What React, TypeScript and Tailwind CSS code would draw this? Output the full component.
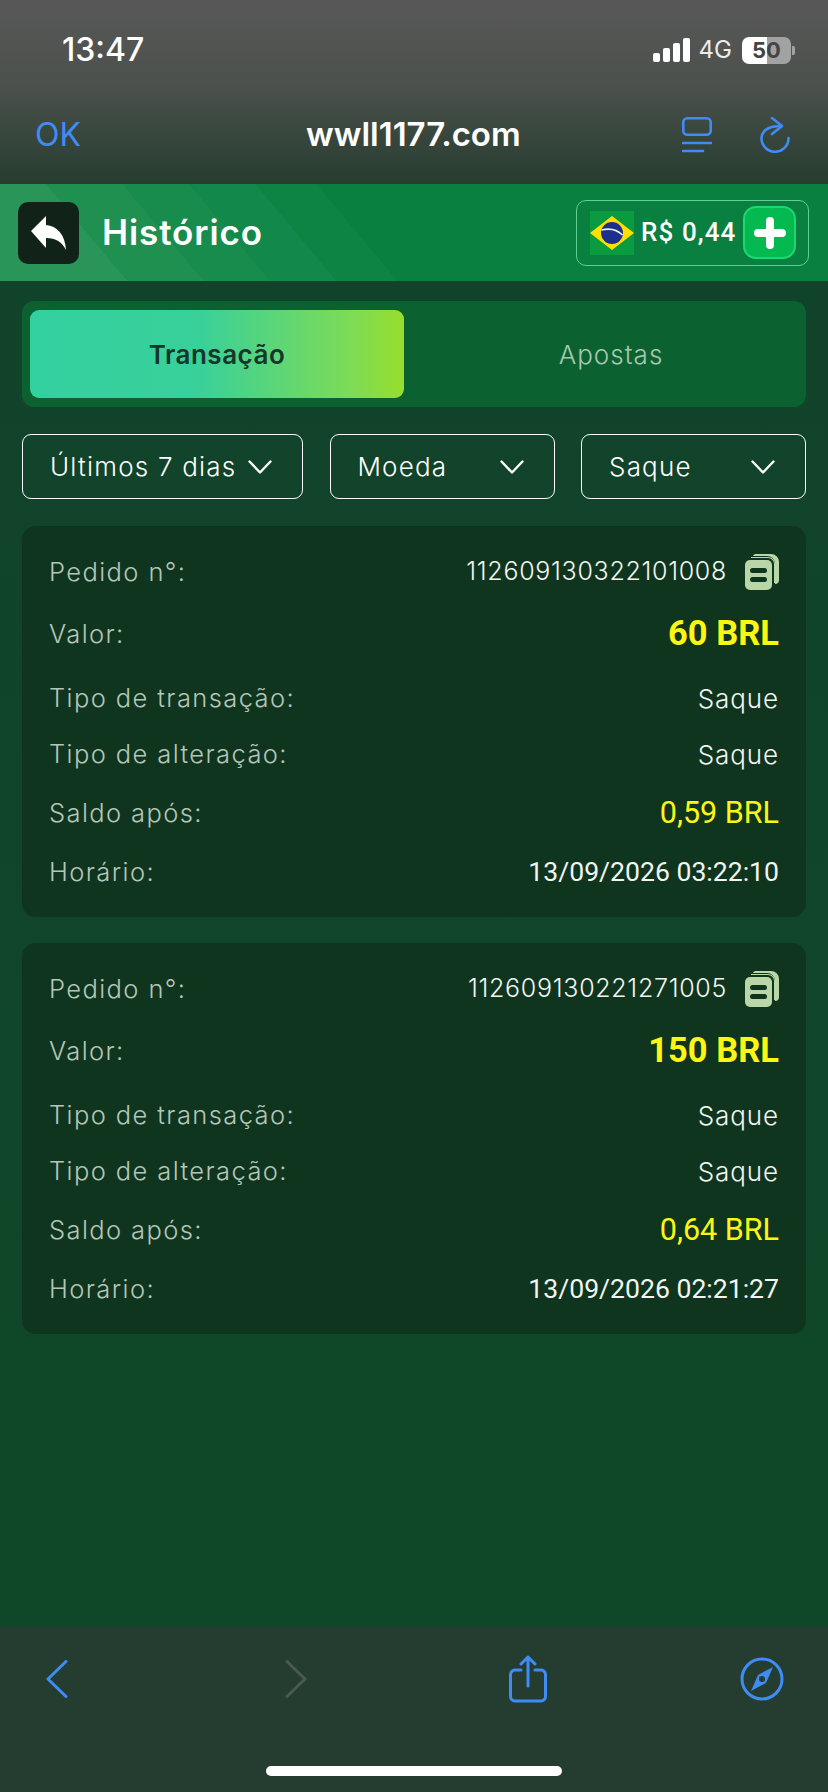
const ROW_GAPS = ["mt-0", "mt-[22px]", "mt-[24px]", "mt-[16px]", "mt-[19px]", "mt-[19px]"];

function CopyIcon() {
  return (
    <svg width="34" height="36" viewBox="0 0 34 36" className="ml-[18px] shrink-0">
      <path d="M10 0h16a8 8 0 0 1 8 8v18a4 4 0 0 1-4 4v-20a8 8 0 0 0-8-8H8a3 3 0 0 1 2-2z" fill="#b9d6a8" />
      <path d="M6 3h17a7 7 0 0 1 7 7v19h-1V10a6 6 0 0 0-6-6H6z" fill="#b9d6a8" />
      <rect x="0" y="6" width="27" height="30" rx="5" fill="#b9d6a8" />
      <rect x="5" y="14" width="17" height="5" rx="2.5" fill="#10351f" />
      <rect x="5" y="23" width="17" height="5" rx="2.5" fill="#10351f" />
    </svg>
  );
}

function Flag() {
  return (
    <svg width="44" height="44" viewBox="0 0 44 44" className="shrink-0">
      <rect width="44" height="44" fill="#0a9a3f" />
      <polygon points="22,5 44,22 22,39 0,22" fill="#fedf00" />
      <circle cx="22" cy="22" r="11" fill="#1c2f8c" />
      <path d="M11.5 19c8-2 15-1 21 5" stroke="#e6eef0" strokeWidth="1.6" fill="none" />
    </svg>
  );
}

function Chevron() {
  return (
    <svg width="24" height="14" viewBox="0 0 24 14" fill="none" stroke="#fff" strokeWidth="2.4" strokeLinecap="round" strokeLinejoin="round" className="shrink-0">
      <path d="M1.500 1.500L12 12.500 22.500 1.500" />
    </svg>
  );
}

function Row({ label, gap, children }: { label: string; gap: string; children: React.ReactNode }) {
  return (
    <div className={`flex h-[40px] items-center justify-between ${gap}`}>
      <span className="text-[25.500px] font-light tracking-[1.4px] text-[#b4c6b9] [font-family:Inter,sans-serif]">{label}</span>
      {children}
    </div>
  );
}

function RecordCard({ order, value, balance, time }: { order: string; value: string; balance: string; time: string }) {
  const plain = "text-[26px] font-light tracking-[0.9px] text-[#f2f5f2] [font-family:Inter,sans-serif]";
  return (
    <div className="rounded-[14px] bg-[#10351f] px-[27px] pt-[26px] pb-[25px]">
      <Row label="Pedido n°:" gap={ROW_GAPS[0]}>
        <div className="flex items-center">
          <span className="text-[25px] font-light tracking-[0.7px] text-[#f2f5f2] [font-family:Inter,sans-serif]">{order}</span>
          <CopyIcon />
        </div>
      </Row>
      <Row label="Valor:" gap={ROW_GAPS[1]}>
        <span className="text-[34.500px] font-bold text-[#fdf614] [font-family:Roboto,sans-serif]">{value}</span>
      </Row>
      <Row label="Tipo de transação:" gap={ROW_GAPS[2]}>
        <span className={plain}>Saque</span>
      </Row>
      <Row label="Tipo de alteração:" gap={ROW_GAPS[3]}>
        <span className={plain}>Saque</span>
      </Row>
      <Row label="Saldo após:" gap={ROW_GAPS[4]}>
        <span className="text-[30.500px] text-[#fdf614] [font-family:Roboto,sans-serif]">{balance}</span>
      </Row>
      <Row label="Horário:" gap={ROW_GAPS[5]}>
        <span className="text-[26.600px] text-[#f2f5f2] [font-family:Roboto,sans-serif]">{time}</span>
      </Row>
    </div>
  );
}

function Filter({ label, width }: { label: string; width: string }) {
  return (
    <div className={`flex h-[65px] items-center justify-between rounded-[9px] border border-white pl-[27px] pr-[30px] ${width}`}>
      <span className="text-[26px] font-light tracking-[1.2px] text-white [font-family:Inter,sans-serif]">{label}</span>
      <Chevron />
    </div>
  );
}

export default function App() {
  return (
    <div className="flex h-[1792px] w-[828px] flex-col overflow-hidden bg-[#10462a]">
      {/* iOS status + browser bar */}
      <div className="h-[184px] shrink-0 bg-[linear-gradient(180deg,#585858_0%,#4c514d_45%,#263d2f_100%)]">
        <div className="flex h-[100px] items-center justify-between pl-[62px] pr-[33px]">
          <span className="text-[32px] font-medium text-white [font-family:Inter,sans-serif]">13:47</span>
          <div className="flex items-center">
            <svg width="37" height="24" viewBox="0 0 37 24">
              <rect x="0" y="15" width="7" height="9" rx="2" fill="#fff" />
              <rect x="10" y="10" width="7" height="14" rx="2" fill="#fff" />
              <rect x="20" y="5" width="7" height="19" rx="2" fill="#fff" />
              <rect x="30" y="0" width="7" height="24" rx="2" fill="#fff" />
            </svg>
            <span className="ml-[9px] text-[24px] text-[#ececec] [font-family:Inter,sans-serif]">4G</span>
            <div className="ml-[10px] flex h-[27px] w-[49px] items-center justify-center rounded-[7px] bg-[linear-gradient(90deg,#ffffff_50%,#a2a2a2_50%)] text-[22px] leading-none font-bold text-[#444] [font-family:Inter,sans-serif]">
              50
            </div>
            <div className="ml-[1px] h-[9px] w-[3px] rounded-r-[2px] bg-[#a2a2a2]" />
          </div>
        </div>
        <div className="flex h-[70px] items-center pl-[35px] pr-[38px]">
          <span className="w-[271px] text-[32px] text-[#3f8cf5] [font-family:Inter,sans-serif]">OK</span>
          <span className="w-[376px] text-[33px] font-semibold text-white [font-family:Inter,sans-serif]">wwll1177.com</span>
          <svg width="30" height="36" viewBox="0 0 30 36" fill="none" stroke="#3f8cf5" strokeWidth="2.6" strokeLinecap="round">
            <rect x="1.300" y="1.300" width="27.400" height="16.400" rx="4" />
            <path d="M1 26h28M1 34h20" />
          </svg>
          <svg width="30" height="36" viewBox="0 0 30 36" fill="none" stroke="#3f8cf5" strokeWidth="2.6" strokeLinecap="round" strokeLinejoin="round" className="ml-[48px]">
            <path d="M12 1l10 8-10 8" />
            <path d="M21 9.500C9 8 1.500 14 1.500 21.500A13.500 13.500 0 1 0 28.500 21" />
          </svg>
        </div>
      </div>

      {/* App header */}
      <div className="flex h-[97px] shrink-0 items-center bg-[linear-gradient(50deg,#2a9558_0%,#2a9558_14%,#1f9050_14%,#1f9050_22.400%,#188c4d_22.400%,#188c4d_29.700%,#12884a_29.700%,#12884a_37%,#0d8444_37%,#0d8444_43.700%,#0a8040_43.700%)] pl-[18px] pr-[19px]">
        <div className="flex h-[62px] w-[61px] items-center justify-center rounded-[10px] bg-[#112318]">
          <svg width="36" height="34" viewBox="0 0 36 34" fill="#fff">
            <path d="M15 0v9c11 1 19 9 20 25-4-8-10-12-20-12v10L0 15z" />
          </svg>
        </div>
        <span className="ml-[23px] text-[35px] font-semibold tracking-[0.9px] text-white [font-family:Inter,sans-serif]">Histórico</span>
        <div className="ml-auto flex h-[66px] w-[233px] items-center rounded-[10px] border border-[#5fd08f] pl-[13px] pr-[12px]">
          <Flag />
          <span className="ml-[7px] text-[26px] font-medium tracking-[1.100px] text-white [font-family:Roboto,sans-serif]">R$ 0,44</span>
          <div className="ml-auto flex h-[53px] w-[53px] items-center justify-center rounded-[13px] border-2 border-[#1fd670] bg-[#04b94f]">
            <svg width="32" height="32" viewBox="0 0 32 32" fill="#fff">
              <rect x="12" y="0" width="8" height="32" rx="4" />
              <rect x="0" y="12" width="32" height="8" rx="4" />
            </svg>
          </div>
        </div>
      </div>

      {/* Content */}
      <div className="flex-1 bg-[linear-gradient(180deg,#11432a_0%,#0f4829_100%)] px-[22px] pt-[20px]">
        <div className="flex h-[106px] items-center rounded-[12px] bg-[#0c6130] pl-[8px] pr-[8px]">
          <div className="flex h-[88px] w-[374px] items-center justify-center rounded-[9px] bg-[linear-gradient(90deg,#33d0a0_0%,#39d09a_45%,#7cdb58_85%,#97de2c_100%)] text-[26px] font-semibold tracking-[0.5px] text-[#17352a] [font-family:Inter,sans-serif]">
            Transação
          </div>
          <div className="flex-1 pl-[20px] text-center text-[26px] font-light tracking-[1px] text-[#a6c8b0] [font-family:Inter,sans-serif]">Apostas</div>
        </div>

        <div className="mt-[27px] flex justify-between">
          <Filter label="Últimos 7 dias" width="w-[281px]" />
          <Filter label="Moeda" width="w-[225px]" />
          <Filter label="Saque" width="w-[225px]" />
        </div>

        <div className="mt-[27px] flex flex-col gap-[26px]">
          <RecordCard order="112609130322101008" value="60 BRL" balance="0,59 BRL" time="13/09/2026 03:22:10" />
          <RecordCard order="112609130221271005" value="150 BRL" balance="0,64 BRL" time="13/09/2026 02:21:27" />
        </div>
      </div>

      {/* Browser toolbar */}
      <div className="h-[166px] shrink-0 bg-[#253d30] pt-[29px]">
        <div className="flex h-[48px] items-center">
          <svg width="22" height="38" viewBox="0 0 22 38" fill="none" stroke="#3f8cf5" strokeWidth="3" strokeLinecap="round" strokeLinejoin="round" className="ml-[46px]">
            <path d="M20 1.500L2 19l18 17.500" />
          </svg>
          <svg width="22" height="38" viewBox="0 0 22 38" fill="none" stroke="#4a5a50" strokeWidth="3" strokeLinecap="round" strokeLinejoin="round" className="ml-[217px]">
            <path d="M2 1.500L20 19 2 36.500" />
          </svg>
          <svg width="38" height="48" viewBox="0 0 38 48" fill="none" stroke="#3f8cf5" strokeWidth="3" strokeLinecap="round" strokeLinejoin="round" className="ml-[202px]">
            <path d="M12 15H6a4.500 4.500 0 0 0-4.500 4.500v22A4.500 4.500 0 0 0 6 46h26a4.500 4.500 0 0 0 4.500-4.500v-22A4.500 4.500 0 0 0 32 15h-6" />
            <path d="M19 31V2M12 9l7-7 7 7" />
          </svg>
          <svg width="44" height="44" viewBox="0 0 44 44" className="ml-[193px]">
            <circle cx="22" cy="22" r="20" fill="none" stroke="#3f8cf5" strokeWidth="3" />
            <path d="M33 10L26 26 18 18z" fill="#3f8cf5" />
            <path d="M11 34l7-16 8 8z" fill="#3f8cf5" />
            <circle cx="22" cy="22" r="3" fill="#253d30" />
          </svg>
        </div>
        <div className="mx-auto mt-[63px] h-[10px] w-[296px] rounded-full bg-white" />
      </div>
    </div>
  );
}
